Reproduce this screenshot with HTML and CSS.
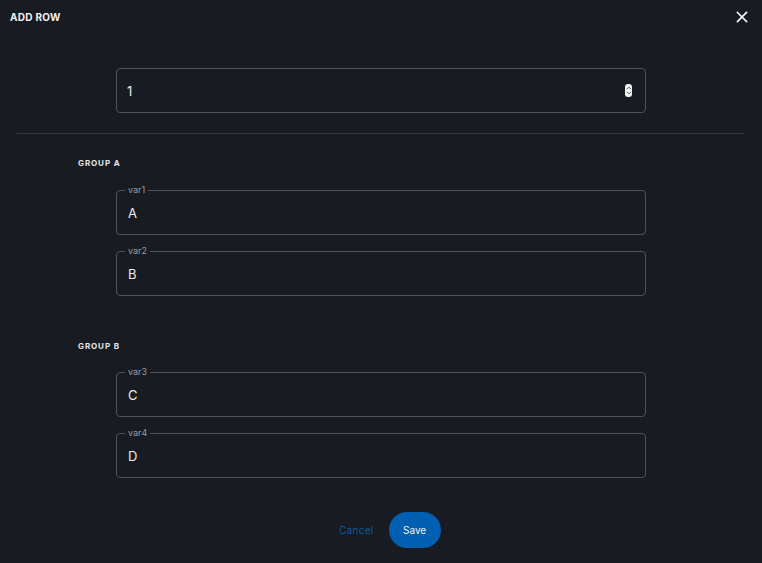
FILE: index.html
```html
<!DOCTYPE html>
<html>
<head>
<meta charset="utf-8">
<link rel="stylesheet" href="styles.css">
</head>
<body>
<div class="dialog">
  <div class="header">
    <span class="title">ADD ROW</span>
    <svg class="close" width="12" height="12" viewBox="0 0 12 12"><path d="M1.5 1.5L10.5 10.5M10.5 1.5L1.5 10.5" stroke="#ffffff" stroke-width="1.6" stroke-linecap="square"/></svg>
  </div>
  <div class="field number">
    <span class="value">1</span>
    <span class="spin"><svg width="6" height="9" viewBox="0 0 6 9"><path d="M1 3.2L3 1.2L5 3.2M1 5.8L3 7.8L5 5.8" stroke="#555" stroke-width="1" fill="none"/></svg></span>
  </div>
  <div class="divider"></div>
  <div class="group">
    <div class="group-title">GROUP A</div>
    <div class="field"><span class="label">var1</span><span class="value">A</span></div>
    <div class="field"><span class="label">var2</span><span class="value">B</span></div>
  </div>
  <div class="group">
    <div class="group-title">GROUP B</div>
    <div class="field"><span class="label">var3</span><span class="value">C</span></div>
    <div class="field"><span class="label">var4</span><span class="value">D</span></div>
  </div>
  <div class="actions">
    <span class="cancel">Cancel</span>
    <span class="save">Save</span>
  </div>
</div>
</body>
</html>
```
FILE: styles.css
```css
html, body {
  margin: 0;
  padding: 0;
  background: #181b22;
  font-family: Inter, "Noto Sans", sans-serif;
  color: #ececec;
}
.dialog {
  width: 762px;
  height: 563px;
  display: flex;
  flex-direction: column;
}
.header {
  height: 34px;
  padding: 0 14px 0 10px;
  display: flex;
  align-items: center;
  justify-content: space-between;
}
.title {
  font-size: 10px;
  font-weight: 700;
  letter-spacing: 0.3px;
  color: #f2f2f2;
}
.field {
  position: relative;
  margin-left: 116px;
  width: 530px;
  height: 45px;
  box-sizing: border-box;
  border: 1px solid #4f5258;
  border-radius: 4px;
  display: flex;
  align-items: center;
  padding-left: 11px;
}
.field + .field {
  margin-top: 16px;
}
.number {
  margin-top: 34px;
  justify-content: space-between;
  padding-right: 13px;
  padding-left: 10px;
}
.value {
  font-size: 13px;
  color: #ededed;
}
.spin {
  width: 7px;
  height: 13px;
  background: #f4f4f4;
  border-radius: 3px;
  display: flex;
  align-items: center;
  justify-content: center;
}
.label {
  position: absolute;
  top: -7px;
  left: 8px;
  padding: 0 3px;
  background: #181b22;
  font-size: 9px;
  line-height: 12px;
  color: #9a9ca2;
}
.divider {
  margin: 20px 17px 0 17px;
  height: 1px;
  background: #33363c;
}
.group {
  display: flex;
  flex-direction: column;
}
.group-title {
  margin: 24px 0 22px 78px;
  font-size: 8px;
  line-height: 10px;
  font-weight: 700;
  letter-spacing: 0.9px;
  color: #e6e6e6;
}
.group + .group .group-title {
  margin-top: 45px;
  margin-bottom: 21px;
}
.actions {
  margin-top: 34px;
  display: flex;
  align-items: center;
  padding-left: 339px;
  gap: 15px;
}
.cancel {
  font-size: 10px;
  letter-spacing: 0.3px;
  color: #0b5aa0;
}
.save {
  width: 52px;
  height: 36px;
  border-radius: 18px;
  background: #005fb0;
  color: #f2f2f2;
  font-size: 10px;
  display: flex;
  align-items: center;
  justify-content: center;
}
```
